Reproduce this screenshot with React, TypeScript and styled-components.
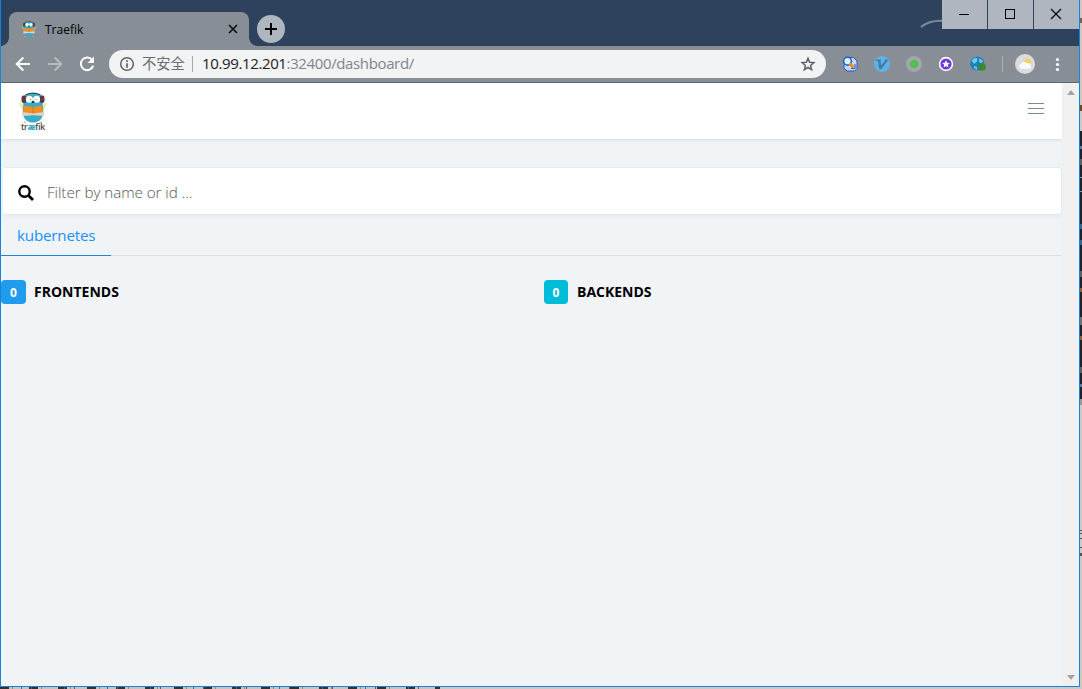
import React from 'react';
import styled, { createGlobalStyle } from 'styled-components';

const ui = '"Open Sans", "Noto Sans", "Noto Sans CJK SC", sans-serif';

const Global = createGlobalStyle`
  *, *::before, *::after { box-sizing: border-box; }
  html, body { margin: 0; padding: 0; overflow: hidden; }
  body { font-family: ${ui}; }
  svg { display: block; flex: none; overflow: visible; }
`;

const Desktop = styled.div`
  width: 1082px;
  height: 689px;
  display: grid;
  grid-template-columns: 1080px 2px;
  grid-template-rows: 687px 2px;
  background: #c8c8c8;
  overflow: hidden;
`;

const Window = styled.div`
  display: flex;
  flex-direction: column;
  border: 1px solid #1883d7;
  border-top: 0;
  background: #f0f4f7;
  overflow: hidden;
`;

const TitleBar = styled.div`
  position: relative;
  height: 46px;
  flex: none;
  display: flex;
  background: #2f425d;
`;

const Tab = styled.div`
  position: relative;
  align-self: flex-end;
  width: 240px;
  height: 34px;
  margin-left: 8px;
  padding: 0 10px 0 12px;
  display: flex;
  align-items: center;
  background: #878e95;
  border-radius: 8px 8px 0 0;
  &::before, &::after {
    content: '';
    position: absolute;
    bottom: 0;
    width: 8px;
    height: 8px;
  }
  &::before { left: -8px; background: radial-gradient(circle at 0 0, transparent 7.5px, #878e95 8px); }
  &::after { right: -8px; background: radial-gradient(circle at 100% 0, transparent 7.5px, #878e95 8px); }
`;

const TabTitle = styled.span`
  flex: 1;
  margin-left: 8px;
  padding-top: 2px;
  font-size: 12px;
  line-height: 16px;
  color: #000;
`;

const NewTab = styled.div`
  width: 28px;
  height: 28px;
  margin: 15px 0 0 8px;
  border-radius: 50%;
  background: #afb6bf;
  display: grid;
  place-items: center;
`;

const Streak = styled.svg`
  position: absolute;
  left: 918px;
  top: 16px;
`;

const Controls = styled.div`
  margin-left: auto;
  display: flex;
  gap: 1px;
  height: 29px;
  z-index: 1;
`;

const Control = styled.div`
  width: 45px;
  display: grid;
  place-items: center;
  background: #afb6bf;
`;

const Toolbar = styled.div`
  height: 37px;
  flex: none;
  display: flex;
  align-items: center;
  padding: 0 12px 1px 13px;
  background: #878e95;
  border-bottom: 1px solid #62676d;
`;

const NavButtons = styled.div`
  display: flex;
  gap: 14px;
`;

const Address = styled.div`
  width: 717px;
  height: 28px;
  margin-left: 13px;
  padding: 0 10px;
  display: flex;
  align-items: center;
  border-radius: 14px;
  background: #f1f3f4;
  color: #6b6e72;
  white-space: nowrap;
`;

const Unsafe = styled.span`
  margin-left: 7px;
  width: 50px;
  padding-bottom: 1px;
  font-family: "Noto Sans CJK SC", sans-serif;
  font-size: 14.3px;
  line-height: 20px;
`;

const Divider = styled.span<{ $color: string }>`
  width: 1px;
  height: 16px;
  flex: none;
  background: ${p => p.$color};
`;

const Url = styled.span`
  flex: 1;
  margin-left: 9px;
  padding-bottom: 2px;
  font-size: 15px;
  letter-spacing: -0.37px;
  line-height: 20px;
  color: #80868b;
  b { font-weight: 400; color: #202124; }
`;

const Extensions = styled.div`
  display: flex;
  gap: 16px;
  margin: 0 16px;
`;

const Profile = styled.div`
  display: flex;
  align-items: center;
  margin-left: auto;
  gap: 12px;
`;

const Viewport = styled.div`
  flex: 1;
  display: flex;
  min-height: 0;
`;

const Page = styled.div`
  flex: 1;
  min-width: 0;
`;

const Header = styled.header`
  height: 57px;
  padding: 9px 18px 0;
  display: flex;
  align-items: flex-start;
  justify-content: space-between;
  background: #fff;
  border-bottom: 1px solid #dde2e6;
  box-shadow: 0 1px 3px rgba(0, 0, 0, 0.06);
`;

const Burger = styled.div`
  width: 16px;
  height: 11px;
  margin-top: 11px;
  display: flex;
  flex-direction: column;
  justify-content: space-between;
`;

const BurgerLine = styled.span`
  height: 1px;
  background: #7a8aa3;
`;

const Search = styled.label`
  height: 48px;
  margin: 27px 0 0 1px;
  padding: 3px 15px 0;
  display: flex;
  align-items: center;
  gap: 13px;
  background: #fff;
  border: 1px solid #e4e9ed;
  border-left-color: #f0f4f7;
  border-radius: 4px;
  box-shadow: 0 2px 4px rgba(0, 0, 0, 0.04);
`;

const Placeholder = styled.span`
  padding-bottom: 2px;
  font-size: 15.2px;
  font-weight: 300;
  letter-spacing: -0.05px;
  line-height: 24px;
  color: #555;
`;

const Tabs = styled.nav`
  height: 41px;
  display: flex;
  border-bottom: 1px solid #dbe1e5;
`;

const ProviderTab = styled.a`
  width: 110px;
  height: 41px;
  padding: 8px 0 0 16px;
  font-size: 15.2px;
  letter-spacing: -0.2px;
  line-height: 24px;
  color: #1991fc;
  border-bottom: 1px solid #2185d8;
`;

const Columns = styled.div`
  display: grid;
  grid-template-columns: 543px 1fr;
  margin-top: 24px;
`;

const Heading = styled.h2`
  margin: 0;
  display: flex;
  align-items: center;
  font-size: 14px;
  font-weight: 700;
  line-height: 24px;
  color: #000;
`;

const Count = styled.span<{ $color: string; $w: number }>`
  width: ${p => p.$w}px;
  height: 24px;
  padding-top: 1px;
  border-radius: 4px;
  background: ${p => p.$color};
  color: #fff;
  font-size: 12px;
  text-align: center;
`;

const Label = styled.span<{ $gap: number }>`
  margin-left: ${p => p.$gap}px;
`;

const ScrollBar = styled.div`
  width: 17px;
  padding: 7px 0 6px;
  display: flex;
  flex-direction: column;
  justify-content: space-between;
  align-items: center;
  background: #f0f0f0;
`;

const RightEdge = styled.div`
  background:
    linear-gradient(#4b7fa8, #4b7fa8) 0 146px / 2px 3px no-repeat,
    linear-gradient(#5b6067, #5b6067) 0 159px / 2px 6px no-repeat,
    linear-gradient(#7e9fc0, #7e9fc0) 0 177px / 2px 1px no-repeat,
    linear-gradient(#7e9fc0, #7e9fc0) 0 191px / 2px 1px no-repeat,
    linear-gradient(#2f6798, #2f6798) 0 224px / 2px 5px no-repeat,
    linear-gradient(#2f6798, #2f6798) 0 240px / 2px 5px no-repeat,
    linear-gradient(#5b6067, #5b6067) 0 271px / 2px 6px no-repeat,
    linear-gradient(#8a6238, #8a6238) 0 288px / 2px 4px no-repeat,
    linear-gradient(#6d7075, #6d7075) 0 317px / 2px 8px no-repeat,
    linear-gradient(#8a6238, #8a6238) 0 336px / 2px 4px no-repeat,
    linear-gradient(#5b6067, #5b6067) 0 367px / 2px 6px no-repeat,
    linear-gradient(#4b7fa8, #4b7fa8) 0 384px / 2px 3px no-repeat,
    linear-gradient(#1b2230, #1b2230) 0 131px / 2px 268px no-repeat,
    linear-gradient(#999, #999) 0 399px / 2px 6px no-repeat,
    linear-gradient(#6b4a2a, #6b4a2a) 0 105px / 2px 6px no-repeat,
    linear-gradient(#666, #666) 0 18px / 2px 5px no-repeat,
    linear-gradient(#555, #555) 0 530px / 2px 1px no-repeat,
    linear-gradient(#555, #555) 0 533px / 2px 1px no-repeat,
    linear-gradient(#555, #555) 0 538px / 2px 1px no-repeat,
    linear-gradient(#555, #555) 0 547px / 2px 1px no-repeat,
    linear-gradient(#555, #555) 0 553px / 2px 3px no-repeat,
    #c9cacc;
`;

const BottomEdge = styled.div`
  width: 440px;
  background:
    repeating-linear-gradient(90deg, transparent 0 21px, #3e68a0 21px 22px, transparent 22px 31px, #7a4a6a 31px 32px, transparent 32px 43px),
    repeating-linear-gradient(90deg, #35302e 0 9px, transparent 9px 12px, #a08a68 12px 13px, transparent 13px 29px),
    #c4c4c4;
`;

const Logo = styled.div`
  width: 28px;
  height: 47px;
  display: flex;
  flex-direction: column;
  align-items: center;
`;

const Wordmark = styled.span`
  margin-top: -2px;
  font-size: 8.5px;
  font-weight: 600;
  letter-spacing: -0.2px;
  line-height: 12px;
  color: #444;
  b { color: #37abc8; }
`;

function Mascot({ w, h }: { w: number; h: number }) {
  return (
    <svg width={w} height={h} viewBox="0 0 28 31">
      <path d="M1 11l4 8M27 11l-4 8" stroke="#d2df79" strokeWidth="1.3" />
      <path d="M4.5 8C6 2 10 1 14 1s8 1 9.500 7l.8 13c-1 7-5.300 9.500-10.300 9.500S4.700 28 3.700 21z" fill="#37abc8" />
      <path d="M5 4.500C8 0 20 0 23 4.500" fill="none" stroke="#333" strokeWidth="1" />
      <rect x="2.500" y="3.500" width="4.800" height="7.500" rx="2.200" fill="#5b3a42" />
      <rect x="20.700" y="3.500" width="4.800" height="7.500" rx="2.200" fill="#5b3a42" />
      <circle cx="10.400" cy="7.200" r="3.500" fill="#fff" />
      <circle cx="17.600" cy="7.200" r="3.500" fill="#fff" />
      <circle cx="11.500" cy="7.500" r=".5" fill="#555" />
      <circle cx="17" cy="7.500" r=".5" fill="#555" />
      <ellipse cx="14" cy="10" rx="1.500" ry="1.100" fill="#222" />
      <path d="M4.500 13.500l9.500 1.700 9.500-1.700v7.500l-9.500 1-9.500-1z" fill="#f28f20" />
      <path d="M14 15v6" stroke="#b86d20" strokeWidth=".7" />
      <path d="M3 20l11 1.500L25 20v4l-11-.8L3 24z" fill="#ddd3c8" />
      <path d="M5 29l3.500 2H5zM23 29l-3.500 2H23z" fill="#edc27d" />
    </svg>
  );
}

export default function App() {
  return (
    <>
      <Global />
      <Desktop>
        <Window>
          <TitleBar>
            <Streak width="24" height="14" viewBox="0 0 24 14">
              <path d="M2 10.800C8 6.500 14 4.300 23 4.800" fill="none" stroke="#7f899a" strokeWidth="2.200" />
            </Streak>
            <Tab>
              <Mascot w={16} h={16} />
              <TabTitle>Traefik</TabTitle>
              <svg width="12" height="12" viewBox="0 0 12 12"><path d="M2 2l8 8M10 2l-8 8" stroke="#111" strokeWidth="1.700" /></svg>
            </Tab>
            <NewTab>
              <svg width="12" height="12" viewBox="0 0 12 12"><path d="M6 0v12M0 6h12" stroke="#000" strokeWidth="2" /></svg>
            </NewTab>
            <Controls>
              <Control><svg width="11" height="11"><path d="M0 5.500h10" stroke="#000" /></svg></Control>
              <Control><svg width="11" height="11"><rect x=".5" y=".5" width="9" height="9" fill="none" stroke="#000" /></svg></Control>
              <Control><svg width="11" height="11"><path d="M0 0l10 10M10 0L0 10" stroke="#000" strokeWidth="1.200" /></svg></Control>
            </Controls>
          </TitleBar>

          <Toolbar>
            <NavButtons>
              <svg width="18" height="18" viewBox="0 0 18 18" fill="none" stroke="#fff" strokeWidth="2"><path d="M16 9H3M9.300 2.500L2.800 9l6.500 6.500" /></svg>
              <svg width="18" height="18" viewBox="0 0 18 18" fill="none" stroke="#b8bcc0" strokeWidth="2"><path d="M2 9h13M8.700 2.500L15.200 9l-6.500 6.500" /></svg>
              <svg width="18" height="18" viewBox="0 0 18 18"><path d="M14.200 5A6.300 6.300 0 1 0 15.200 10.600" fill="none" stroke="#fff" strokeWidth="2" /><path d="M16 1.500V8H9.500z" fill="#fff" /></svg>
            </NavButtons>
            <Address>
              <svg width="16" height="16" viewBox="0 0 16 16"><circle cx="8" cy="8" r="6.300" fill="none" stroke="#5f6368" strokeWidth="1.500" /><path d="M8 4.300v1.600M8 7.200v4.500" stroke="#5f6368" strokeWidth="1.700" /></svg>
              <Unsafe>不安全</Unsafe>
              <Divider $color="#a4a7aa" />
              <Url><b>10.99.12.201</b>:32400/dashboard/</Url>
              <svg width="16" height="16" viewBox="0 0 16 16"><path d="M8 2.200l1.600 4 4.300.4-3.300 2.900 1 4.200L8 11.500l-3.600 2.200 1-4.200-3.300-2.900 4.300-.4z" fill="none" stroke="#5f6368" strokeWidth="1.500" /></svg>
            </Address>
            <Extensions>
              <svg width="16" height="16" viewBox="0 0 16 16">
                <path d="M8 1.500h3.500L15 5v7.500L12.500 15H5l-3-3V9z" fill="#c4d8f5" stroke="#2c57b5" />
                <circle cx="5.500" cy="5.200" r="3.900" fill="#dff2ff" stroke="#1f5ed0" strokeWidth="1.600" />
                <path d="M7.500 7.500l4 4" stroke="#f28a18" strokeWidth="2.800" />
                <path d="M9 12.500h4V8" fill="none" stroke="#2c57b5" />
              </svg>
              <svg width="16" height="16" viewBox="0 0 16 16"><circle cx="8" cy="8" r="8" fill="#60b1e5" /><path d="M2 3.500h4.700v1.300L7 9.500l4-4.500-.3-1.500h3.800L7.500 13H5.200L4 5H2z" fill="#447c9f" /></svg>
              <svg width="16" height="16" viewBox="0 0 16 16"><circle cx="8" cy="8" r="8" fill="#a6a6a6" /><circle cx="8" cy="8" r="4.200" fill="#53bd55" /></svg>
              <svg width="16" height="16" viewBox="0 0 16 16"><circle cx="8" cy="8" r="6.400" fill="#6e39d6" stroke="#fff" strokeWidth="1.600" /><path d="M8 4.300l1.100 2.500 2.700.2-2 1.800.6 2.700L8 10.100l-2.400 1.400.6-2.700-2-1.800 2.700-.2z" fill="#fff" /></svg>
              <svg width="16" height="16" viewBox="0 0 16 16"><circle cx="7.200" cy="7.500" r="7" fill="#1f7fb8" /><path d="M1.500 4.500L5 1.500l2.500 1L7 5.500 4 8zM9.500 2l3.500 3-1.500 2.500L9 6zM4 10l3 1v3l-3-2z" fill="#6cc9ec" /><circle cx="12" cy="11" r="2.600" fill="none" stroke="#3f8a14" strokeWidth="2.300" /></svg>
            </Extensions>
            <Divider $color="#abb0b5" />
            <Profile>
              <svg width="20" height="20" viewBox="0 0 20 20"><circle cx="10" cy="10" r="10" fill="#dcdcdc" /><circle cx="12.700" cy="8" r="3.600" fill="#f5cf66" /><path d="M6 15a3 3 0 0 1 0-5.500 3.500 3.500 0 0 1 6-.2 3 3 0 0 1 2 5.700z" fill="#f5faff" /></svg>
              <svg width="20" height="16" viewBox="0 0 20 16" fill="#fff"><circle cx="10.500" cy="3.500" r="1.600" /><circle cx="10.500" cy="8.500" r="1.600" /><circle cx="10.500" cy="13.500" r="1.600" /></svg>
            </Profile>
          </Toolbar>

          <Viewport>
            <Page>
              <Header>
                <Logo>
                  <Mascot w={28} h={31} />
                  <Wordmark>tr<b>æ</b>fik</Wordmark>
                </Logo>
                <Burger><BurgerLine /><BurgerLine /><BurgerLine /></Burger>
              </Header>
              <Search>
                <svg width="16" height="16" viewBox="0 0 16 16"><circle cx="6.500" cy="6.500" r="5.200" fill="none" stroke="#000" strokeWidth="2.400" /><path d="M10.200 10.200l4.800 4.800" stroke="#000" strokeWidth="2.800" /></svg>
                <Placeholder>Filter by name or id ...</Placeholder>
              </Search>
              <Tabs><ProviderTab>kubernetes</ProviderTab></Tabs>
              <Columns>
                <Heading><Count $color="#209cee" $w={25}>0</Count><Label $gap={8}>FRONTENDS</Label></Heading>
                <Heading><Count $color="#00bcd8" $w={24}>0</Count><Label $gap={9}>BACKENDS</Label></Heading>
              </Columns>
            </Page>
            <ScrollBar>
              <svg width="8" height="5"><path d="M4 0l4 5H0z" fill="#a3a3a3" /></svg>
              <svg width="8" height="5"><path d="M0 0h8L4 5z" fill="#a3a3a3" /></svg>
            </ScrollBar>
          </Viewport>
        </Window>
        <RightEdge />
        <BottomEdge />
      </Desktop>
    </>
  );
}
